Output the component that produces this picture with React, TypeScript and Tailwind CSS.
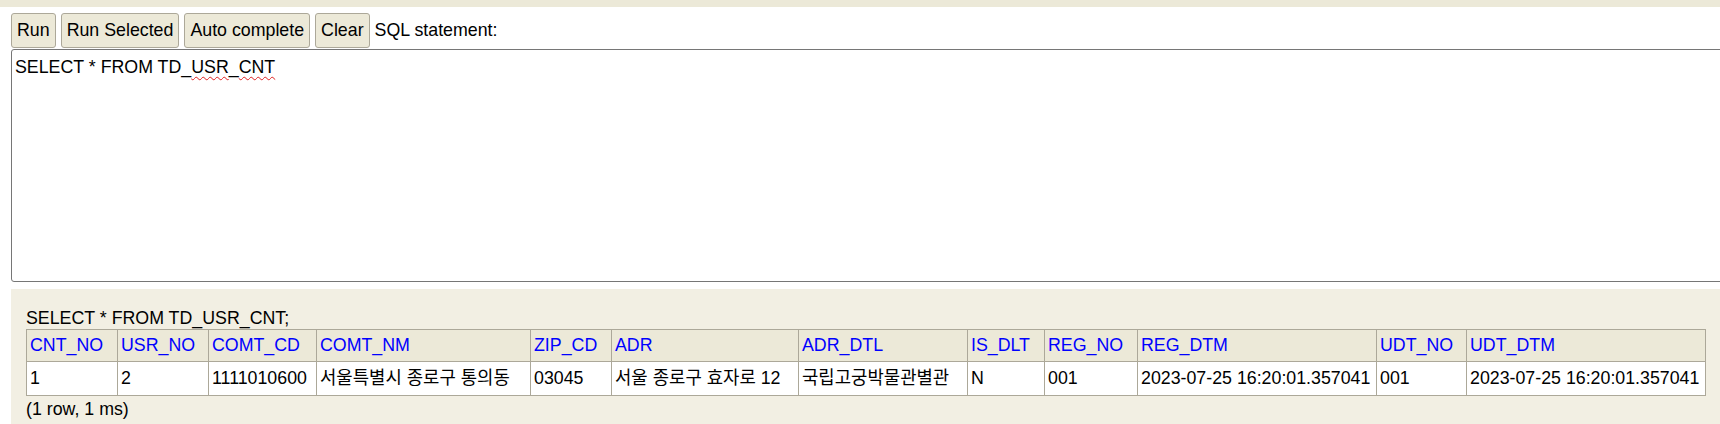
import React from "react";

const cols: { name: string; w: number }[] = [
  { name: "CNT_NO", w: 91 },
  { name: "USR_NO", w: 91 },
  { name: "COMT_CD", w: 108 },
  { name: "COMT_NM", w: 214 },
  { name: "ZIP_CD", w: 81 },
  { name: "ADR", w: 187 },
  { name: "ADR_DTL", w: 169 },
  { name: "IS_DLT", w: 77 },
  { name: "REG_NO", w: 93 },
  { name: "REG_DTM", w: 239 },
  { name: "UDT_NO", w: 90 },
  { name: "UDT_DTM", w: 239 },
];

const row = [
  "1",
  "2",
  "1111010600",
  "서울특별시 종로구 통의동",
  "03045",
  "서울 종로구 효자로 12",
  "국립고궁박물관별관",
  "N",
  "001",
  "2023-07-25 16:20:01.357041",
  "001",
  "2023-07-25 16:20:01.357041",
];

const font = {
  fontFamily: '"Liberation Sans", Arial, "Noto Sans CJK KR", sans-serif',
};

function Btn({ children }: { children: React.ReactNode }) {
  return (
    <button className="h-[35px] px-[5px] bg-[#ece9d8] border border-[#aca899] rounded-[3px] text-[17.8px] leading-[21px] text-black whitespace-nowrap">
      {children}
    </button>
  );
}

export default function App() {
  return (
    <div
      className="w-[1720px] h-[424px] overflow-hidden bg-white flex flex-col text-black text-[17.8px]"
      style={font}
    >
      <div className="h-[7px] shrink-0 bg-[#ece9d8]" />
      <div className="mt-[6px] ml-[11px] flex items-center gap-[5px] h-[35px] shrink-0">
        <Btn>Run</Btn>
        <Btn>Run Selected</Btn>
        <Btn>Auto complete</Btn>
        <Btn>Clear</Btn>
        <span className="leading-[21px] whitespace-nowrap">SQL statement:</span>
      </div>
      <div className="mt-[1px] ml-[11px] w-[1740px] h-[233px] shrink-0 border border-[#767676] rounded-[3px] bg-white pl-[3px] pt-[7px] leading-[21px] whitespace-nowrap">
        SELECT * FROM TD_
        <span className="underline decoration-wavy decoration-[#e02020] decoration-1 underline-offset-[3px]">
          USR
        </span>
        _
        <span className="underline decoration-wavy decoration-[#e02020] decoration-1 underline-offset-[3px]">
          CNT
        </span>
      </div>
      <div className="mt-[7px] ml-[11px] flex-1 bg-[#f2efe3] pt-[19px] pl-[15px] w-[1740px]">
        <div className="leading-[21px] whitespace-nowrap">SELECT * FROM TD_USR_CNT;</div>
        <table className="table-fixed border-collapse w-[1679px] bg-white">
          <colgroup>
            {cols.map((c) => (
              <col key={c.name} style={{ width: c.w }} />
            ))}
          </colgroup>
          <thead>
            <tr>
              {cols.map((c) => (
                <th
                  key={c.name}
                  className="bg-[#ece9d8] border border-[#aca899] text-left font-normal text-[#0000ff] pl-[3px] pr-0 py-[5px] leading-[21px] whitespace-nowrap overflow-hidden"
                >
                  {c.name}
                </th>
              ))}
            </tr>
          </thead>
          <tbody>
            <tr>
              {row.map((v, i) => (
                <td
                  key={i}
                  className="bg-white border border-[#aca899] text-left pl-[3px] pr-0 py-[5px] leading-[23px] whitespace-nowrap overflow-hidden"
                >
                  {v}
                </td>
              ))}
            </tr>
          </tbody>
        </table>
        <div className="mt-[3px] leading-[21px] whitespace-nowrap">(1 row, 1 ms)</div>
      </div>
    </div>
  );
}
